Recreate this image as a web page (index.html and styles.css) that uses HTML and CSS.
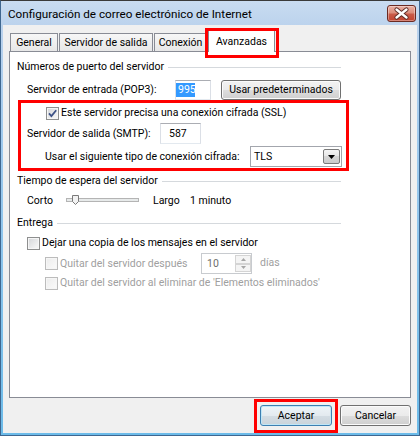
FILE: index.html
```html
<!DOCTYPE html>
<html lang="es">
<head>
<meta charset="utf-8">
<title>Configuración de correo electrónico de Internet</title>
<link rel="stylesheet" href="styles.css">
</head>
<body>
<div class="window">
  <div class="titlebar">
    <span class="title">Configuración de correo electrónico de Internet</span>
    <button class="close" aria-label="Cerrar">
      <svg width="29" height="17" viewBox="0 0 29 17">
        <path d="M9.5 4.5 L19.5 12.5 M19.5 4.5 L9.5 12.5" stroke="#5a2a24" stroke-width="4.2" stroke-linecap="round" fill="none"/>
        <path d="M9.5 4.5 L19.5 12.5 M19.5 4.5 L9.5 12.5" stroke="#ffffff" stroke-width="2.4" stroke-linecap="round" fill="none"/>
      </svg>
    </button>
  </div>
  <div class="client">
    <div class="tabs">
      <div class="tab t-general">General</div>
      <div class="tab t-salida">Servidor de salida</div>
      <div class="tab t-conexion">Conexión</div>
      <div class="tab t-avanzadas active">Avanzadas</div>
    </div>
    <div class="panel">
      <div class="ghead g1"><span class="glabel">Números de puerto del servidor</span><span class="rule"></span></div>
      <div class="row r-pop3">
        <span class="lbl l-pop3">Servidor de entrada (POP3):</span>
        <div class="field f-pop3"><span class="sel">995</span></div>
        <button class="btn b-pred">Usar predeterminados</button>
      </div>
      <div class="mark">
        <div class="row r-ssl">
          <span class="cb"><svg width="11" height="11" viewBox="0 0 11 11"><path d="M2 5.3 L4.4 8 L9.2 2.2" fill="none" stroke="#3d5286" stroke-width="1.8"/></svg></span>
          <span class="cbtext">Este servidor precisa una conexión cifrada (SSL)</span>
        </div>
        <div class="row r-smtp">
          <span class="lbl l-smtp">Servidor de salida (SMTP):</span>
          <div class="field f-smtp">587</div>
        </div>
        <div class="row r-tls">
          <span class="lbl l-tls">Usar el siguiente tipo de conexión cifrada:</span>
          <div class="combo">
            <span class="cval">TLS</span>
            <span class="drop"><svg width="7" height="4" viewBox="0 0 7 4"><path d="M0 0H7L3.5 4Z" fill="#000"/></svg></span>
          </div>
        </div>
      </div>
      <div class="ghead g2"><span class="glabel">Tiempo de espera del servidor</span><span class="rule"></span></div>
      <div class="row r-slider">
        <span class="s-corto">Corto</span>
        <svg class="slider" width="74" height="16" viewBox="0 0 74 16">
          <rect x="0.5" y="6.5" width="72" height="3" fill="#e7eaea" stroke="#b4b4b4"/>
          <path d="M6.5 3.5 H12.5 V9.5 L9.5 12.5 L6.5 9.5 Z" fill="#f2f2f2" stroke="#7a7a7a"/>
        </svg>
        <span class="s-largo">Largo</span>
        <span class="s-min">1 minuto</span>
      </div>
      <div class="ghead g3"><span class="glabel">Entrega</span><span class="rule"></span></div>
      <div class="row r-cb1">
        <span class="cb"></span>
        <span class="cbtext">Dejar una copia de los mensajes en el servidor</span>
      </div>
      <div class="row r-cb2 disabled">
        <span class="cb"></span>
        <span class="cbtext t-despues">Quitar del servidor después</span>
        <div class="spin">
          <span class="sval">10</span>
          <span class="sarrows">
            <span class="sbtn"><svg width="5" height="3" viewBox="0 0 5 3"><path d="M0 3H5L2.5 0Z" fill="#a6a6a6"/></svg></span>
            <span class="sbtn"><svg width="5" height="3" viewBox="0 0 5 3"><path d="M0 0H5L2.5 3Z" fill="#a6a6a6"/></svg></span>
          </span>
        </div>
        <span class="dias">días</span>
      </div>
      <div class="row r-cb3 disabled">
        <span class="cb"></span>
        <span class="cbtext">Quitar del servidor al eliminar de 'Elementos eliminados'</span>
      </div>
    </div>
    <div class="actions">
      <button class="btn b-ok">Aceptar</button>
      <button class="btn b-cancel">Cancelar</button>
    </div>
  </div>
</div>
</body>
</html>
```
FILE: styles.css
```css
* { box-sizing: border-box; }
html, body { margin: 0; padding: 0; }
body {
  width: 420px;
  height: 436px;
  overflow: hidden;
  font-family: Roboto, "Liberation Sans", Arial, sans-serif;
  font-size: 10.5px;
  color: #000;
  background: #fff;
}

.window {
  width: 420px;
  height: 436px;
  display: flex;
  flex-direction: column;
  border: 1px solid #3f6790;
  border-top-color: #3a3a3a;
  padding: 0 2px 2px 2px;
  background: linear-gradient(#c9dcf1 0px, #bcd3ed 24px, #a3cbee 120px, #6cbbe9 100%);
}

.titlebar {
  height: 24px;
  flex: none;
  display: flex;
  align-items: flex-start;
  padding-left: 5px;
}
.title {
  font-size: 11.7px;
  line-height: 16px;
  margin-top: 5px;
  white-space: nowrap;
}
.close {
  margin: 4px 1px 0 auto;
  width: 29px;
  height: 17px;
  padding: 0;
  border: 1px solid #6b2a22;
  border-radius: 3px;
  background: linear-gradient(#eab0a3 0%, #dc8d7b 45%, #c95a48 55%, #c2432f 100%);
  box-shadow: inset 0 0 0 1px rgba(255, 255, 255, 0.35);
  display: flex;
  align-items: center;
  justify-content: center;
}
.close svg { display: block; margin: -1px; }

.client {
  flex: 1;
  background: #f0f0f0;
  padding: 5px 6px 0 6px;
  display: flex;
  flex-direction: column;
}

/* tabs */
.tabs {
  height: 21px;
  display: flex;
  align-items: flex-end;
  gap: 1px;
  margin-left: 1px;
}
.tab {
  height: 18px;
  border: 1px solid #898c95;
  border-bottom: none;
  background: linear-gradient(#f7f7f7, #e7e7e7);
  text-align: center;
  line-height: 16px;
  padding-top: 1px;
  white-space: nowrap;
}
.t-general { width: 48px; }
.t-salida { width: 94px; }
.t-conexion { width: 53px; }
.t-avanzadas { width: 67px; }
.tab.active {
  height: 22px;
  margin-bottom: -1px;
  background: #fff;
  padding-top: 3px;
  position: relative;
  z-index: 1;
}
.tab.active::after {
  content: "";
  position: absolute;
  left: -4px;
  right: -5px;
  top: -3px;
  bottom: -6px;
  border: 3px solid #f00;
  pointer-events: none;
}

/* panel */
.panel {
  width: 402px;
  height: 347px;
  flex: none;
  border: 1px solid #898c95;
  background: #fff;
}

.ghead {
  display: flex;
  align-items: center;
  height: 16px;
  margin-left: 7px;
  width: 324px;
}
.glabel { line-height: 16px; white-space: nowrap; }
.rule {
  flex: 1;
  height: 1px;
  background: #d5d9dd;
  margin-left: 4px;
}
.g1 { margin-top: 7px; }
.g2 { margin-top: 2px; }
.g3 { margin-top: 7px; }

.row {
  display: flex;
  align-items: center;
  white-space: nowrap;
}
.lbl { line-height: 16px; }

.r-pop3 { margin-top: 5px; height: 20px; padding-left: 17px; }
.l-pop3 { width: 148px; }
.field {
  height: 20px;
  border: 1px solid #dbdfe6;
  border-top-color: #abadb3;
  border-bottom-color: #e3e9ef;
  background: #fff;
  line-height: 18px;
}
.f-pop3 { width: 36px; padding-left: 0; display: flex; align-items: center; }
.sel {
  background: #3399ff;
  color: #fff;
  line-height: 14px;
  padding: 0 2px 0 2px;
  width: 19px;
}
.btn {
  font: inherit;
  color: #000;
  padding: 0;
  border: 1px solid #707070;
  border-radius: 3px;
  background: linear-gradient(#f2f2f2 0%, #ebebeb 50%, #dddddd 50%, #cfcfcf 100%);
  box-shadow: inset 0 0 0 1px #fbfbfb;
  line-height: 16px;
}
.b-pred { margin-left: 10px; width: 120px; height: 20px; }

.mark {
  margin-left: 8px;
  width: 331px;
  height: 71px;
  border: 3px solid #f00;
}
.r-ssl { margin-top: 2px; height: 16px; padding-left: 25px; }
.r-smtp { margin-top: 2px; height: 21px; padding-left: 6px; }
.l-smtp { width: 133px; }
.f-smtp { width: 41px; height: 21px; padding-left: 8px; line-height: 19px; }
.r-tls { margin-top: 2px; height: 21px; padding-left: 24px; }
.l-tls { width: 205px; }
.combo {
  width: 92px;
  height: 21px;
  border: 1px solid #a3a6ad;
  background: #fff;
  display: flex;
  align-items: center;
  justify-content: space-between;
  padding: 0 1px 0 3px;
}
.cval { line-height: 16px; }
.drop {
  width: 17px;
  height: 15px;
  border: 1px solid #7a7a7a;
  border-radius: 2px;
  background: linear-gradient(#f4f4f4 0%, #e6e6e6 50%, #d6d6d6 50%, #cbcbcb 100%);
  display: flex;
  align-items: center;
  justify-content: center;
}
.drop svg { display: block; }

/* checkbox */
.cb {
  width: 13px;
  height: 13px;
  flex: none;
  border: 1px solid #8e8f8f;
  background: linear-gradient(135deg, #d3d5d8 0%, #f3f3f3 80%);
  box-shadow: inset 0 0 0 1px #f6f6f6;
  display: flex;
}
.cb svg { display: block; }
.cbtext { margin-left: 2px; line-height: 16px; }

.r-slider { margin-top: 3px; height: 16px; padding-left: 17px; }
.s-corto { width: 39px; }
.slider { display: block; flex: none; }
.s-largo { margin-left: 13px; width: 37px; }

.r-cb1 { margin-top: 4px; height: 16px; padding-left: 17px; }
.r-cb2 { margin-top: 2px; height: 21px; padding-left: 35px; }
.r-cb3 { margin-top: 1px; height: 16px; padding-left: 35px; }
.disabled .cb {
  border-color: #bcbcbc;
  background: linear-gradient(135deg, #ececec 0%, #f8f8f8 80%);
}
.disabled .cbtext, .dias { color: #a0a0a0; }
.t-despues { width: 141px; }

.spin {
  width: 51px;
  height: 21px;
  border: 1px solid #c8cbcf;
  background: #fff;
  display: flex;
}
.sval {
  flex: 1;
  padding-left: 5px;
  line-height: 19px;
  color: #6d6d6d;
}
.sarrows {
  width: 16px;
  display: flex;
  flex-direction: column;
  padding: 1px 0 1px 0;
}
.sbtn {
  flex: 1;
  border: 1px solid #d4d4d4;
  background: #f4f4f4;
  display: flex;
  align-items: center;
  justify-content: center;
}
.sbtn svg { display: block; }
.dias { margin-left: 8px; line-height: 16px; margin-top: -2px; }

/* dialog buttons */
.actions {
  display: flex;
  justify-content: flex-end;
  gap: 8px;
  margin-top: 7px;
}
.b-ok {
  width: 72px;
  height: 21px;
  border-color: #3c7fb1;
  background: linear-gradient(#eef4f8 0%, #e3eaef 50%, #d4dde4 50%, #c9d3da 100%);
  box-shadow: inset 0 0 0 1px #bfe6f7;
  position: relative;
}
.b-ok::after {
  content: "";
  position: absolute;
  left: -7px;
  right: -7px;
  top: -7px;
  bottom: -8px;
  border: 3px solid #f00;
  pointer-events: none;
}
.b-cancel { width: 71px; height: 21px; }
```
